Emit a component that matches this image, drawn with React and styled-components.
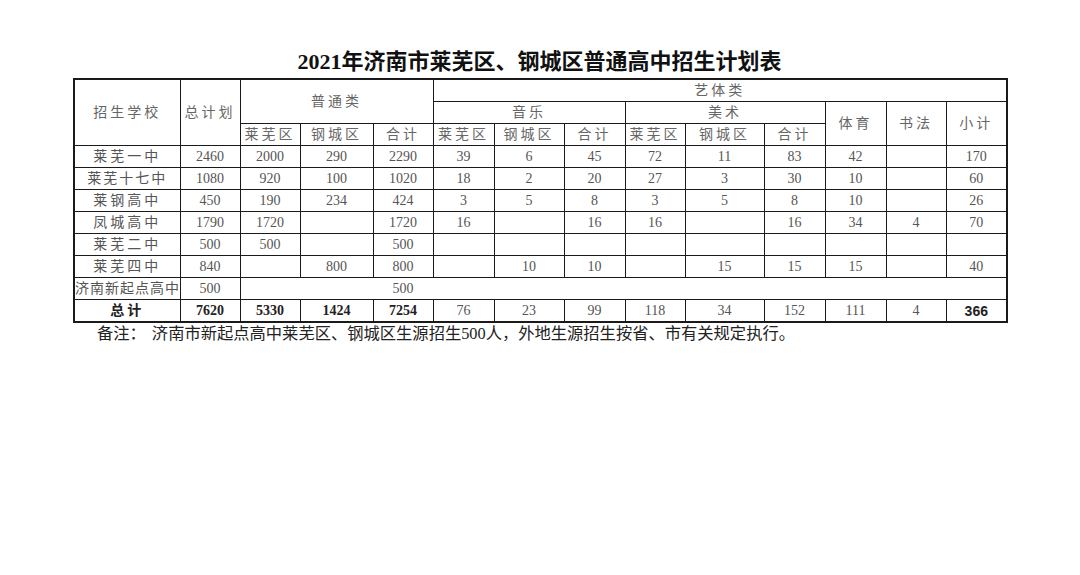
import React from 'react';
import styled, { createGlobalStyle } from 'styled-components';

const GlobalStyle = createGlobalStyle`
  html, body {
    margin: 0;
    padding: 0;
    background: #fff;
  }
  body {
    font-family: "Liberation Serif", "Noto Sans CJK SC", serif;
    color: #222;
  }
`

const Page = styled.div `
  width: 933px;
  padding: 49px 0 0 73px;
`

const Title = styled.h1 `
  margin: 0 0 3px;
  height: 26px;
  line-height: 26px;
  text-align: center;
  font-size: 22px;
  font-weight: 700;
  color: #111;
  font-family: "Liberation Serif", "Noto Sans CJK SC", serif;
`

const Table = styled.table `
  width: 933px;
  border-collapse: collapse;
  table-layout: fixed;
  border: 2px solid #1a1a1a;
`

const Cell = styled.td `
  height: 21px;
  padding: 0;
  border: 1.5px solid #1a1a1a;
  ${p => p.$openLeft && 'border-left: none;'}
  ${p => p.$openRight && 'border-right: none;'}
  text-align: center;
  vertical-align: middle;
  font-size: 14px;
  line-height: 20px;
  color: ${p => (p.$bold ? '#222' : '#555')};
  font-weight: ${p => (p.$bold ? 700 : 400)};
  letter-spacing: ${p => p.$spacing || 0}px;
  white-space: nowrap;
  overflow: hidden;
  font-family: ${p => (p.$sans ? '"Liberation Sans", sans-serif' : '"Liberation Serif", "Noto Sans CJK SC", serif')};
`

const Head = styled(Cell).attrs({ as: 'th' }) `
  font-weight: 400;
  color: #666;
  letter-spacing: ${p => p.$spacing ?? 3}px;
`

const Note = styled.p `
  margin: 1px 0 0 24px;
  font-size: 16.3px;
  line-height: 20px;
  color: #222;
  white-space: nowrap;
`

const Gap = styled.span `
  display: inline-block;
  width: 6px;
`

const widths = [106, 60, 60, 73, 60, 61, 70, 61, 60, 79, 61, 61, 60, 61];

const rows = [
  ['莱芜一中', '2460', '2000', '290', '2290', '39', '6', '45', '72', '11', '83', '42', '', '170'],
  ['莱芜十七中', '1080', '920', '100', '1020', '18', '2', '20', '27', '3', '30', '10', '', '60'],
  ['莱钢高中', '450', '190', '234', '424', '3', '5', '8', '3', '5', '8', '10', '', '26'],
  ['凤城高中', '1790', '1720', '', '1720', '16', '', '16', '16', '', '16', '34', '4', '70'],
  ['莱芜二中', '500', '500', '', '500', '', '', '', '', '', '', '', '', ''],
  ['莱芜四中', '840', '', '800', '800', '', '10', '10', '', '15', '15', '15', '', '40'],
];

const totals = ['7620', '5330', '1424', '7254', '76', '23', '99', '118', '34', '152', '111', '4'];

const App = () => {
  return (
    <>
      <GlobalStyle />
      <Page>
        <Title>2021年济南市莱芜区、钢城区普通高中招生计划表</Title>
        <Table>
          <colgroup>
            {widths.map((w, i) => <col key={i} style={{ width: w }} />)}
          </colgroup>
          <thead>
            <tr>
              <Head rowSpan={3}>招生学校</Head>
              <Head rowSpan={3}>总计划</Head>
              <Head colSpan={3} rowSpan={2}>普通类</Head>
              <Head colSpan={9}>艺体类</Head>
            </tr>
            <tr>
              <Head colSpan={3}>音乐</Head>
              <Head colSpan={3}>美术</Head>
              <Head rowSpan={2}>体育</Head>
              <Head rowSpan={2}>书法</Head>
              <Head rowSpan={2}>小计</Head>
            </tr>
            <tr>
              <Head>莱芜区</Head>
              <Head>钢城区</Head>
              <Head>合计</Head>
              <Head>莱芜区</Head>
              <Head>钢城区</Head>
              <Head>合计</Head>
              <Head>莱芜区</Head>
              <Head>钢城区</Head>
              <Head>合计</Head>
            </tr>
          </thead>
          <tbody>
            {rows.map(r => (
              <tr key={r[0]}>
                <Cell $spacing={r[0].length > 4 ? 2 : 3}>{r[0]}</Cell>
                {r.slice(1).map((v, i) => <Cell key={i}>{v}</Cell>)}
              </tr>
            ))}
            <tr>
              <Cell $spacing={1}>济南新起点高中</Cell>
              <Cell>500</Cell>
              <Cell colSpan={2} $openRight />
              <Cell $openLeft $openRight>500</Cell>
              <Cell colSpan={9} $openLeft />
            </tr>
            <tr>
              <Cell $bold $spacing={3}>总计</Cell>
              {totals.map((v, i) => <Cell key={i} $bold={i < 4}>{v}</Cell>)}
              <Cell $bold $sans>366</Cell>
            </tr>
          </tbody>
        </Table>
        <Note>备注：<Gap />济南市新起点高中莱芜区、钢城区生源招生500人，外地生源招生按省、市有关规定执行。</Note>
      </Page>
    </>
  )
}

export default App;
